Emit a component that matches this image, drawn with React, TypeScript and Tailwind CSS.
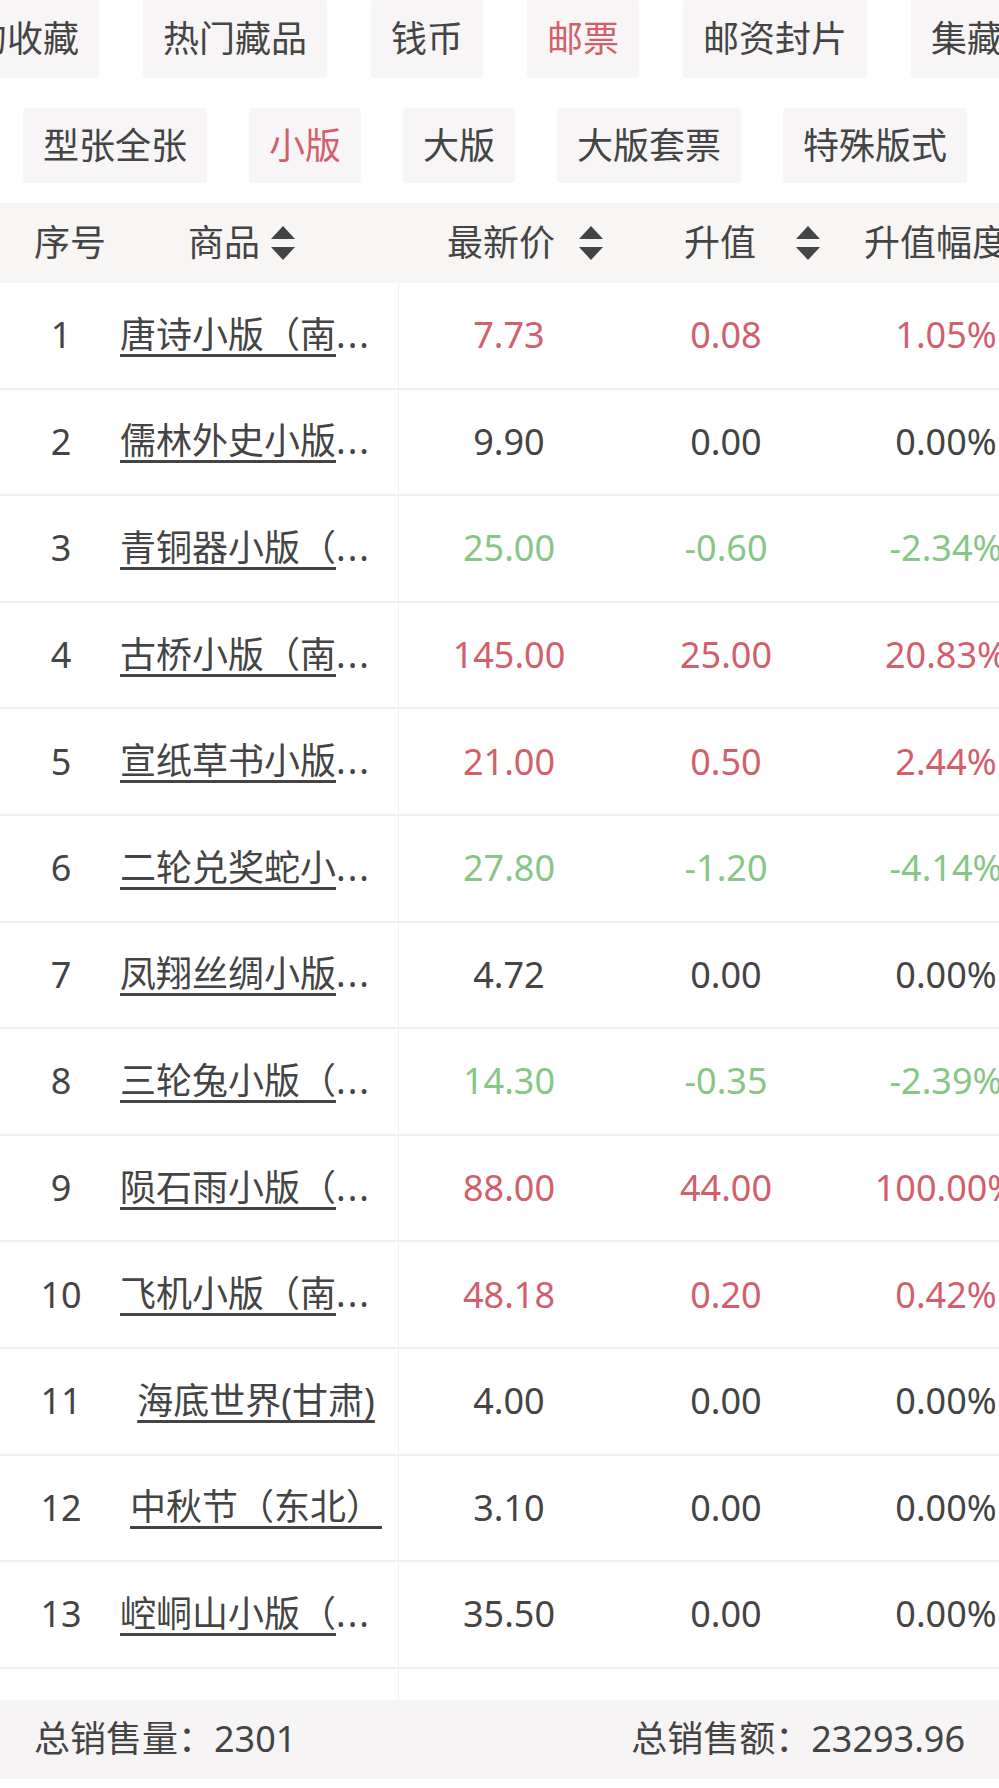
import React from 'react'

type Row = { no: number; name: string; price: string; up: string; pct: string; tone: 'red' | 'green' | 'flat'; fits?: boolean }

const topTabs = ['我的收藏', '热门藏品', '钱币', '邮票', '邮资封片', '集藏品']
const subTabs = ['型张全张', '小版', '大版', '大版套票', '特殊版式']

const rows: Row[] = [
  { no: 1, name: '唐诗小版（南京）', price: '7.73', up: '0.08', pct: '1.05%', tone: 'red' },
  { no: 2, name: '儒林外史小版（南京）', price: '9.90', up: '0.00', pct: '0.00%', tone: 'flat' },
  { no: 3, name: '青铜器小版（南京）', price: '25.00', up: '-0.60', pct: '-2.34%', tone: 'green' },
  { no: 4, name: '古桥小版（南京）', price: '145.00', up: '25.00', pct: '20.83%', tone: 'red' },
  { no: 5, name: '宣纸草书小版（南京）', price: '21.00', up: '0.50', pct: '2.44%', tone: 'red' },
  { no: 6, name: '二轮兑奖蛇小版（南京）', price: '27.80', up: '-1.20', pct: '-4.14%', tone: 'green' },
  { no: 7, name: '凤翔丝绸小版（南京）', price: '4.72', up: '0.00', pct: '0.00%', tone: 'flat' },
  { no: 8, name: '三轮兔小版（南京）', price: '14.30', up: '-0.35', pct: '-2.39%', tone: 'green' },
  { no: 9, name: '陨石雨小版（南京）', price: '88.00', up: '44.00', pct: '100.00%', tone: 'red' },
  { no: 10, name: '飞机小版（南京）', price: '48.18', up: '0.20', pct: '0.42%', tone: 'red' },
  { no: 11, name: '海底世界(甘肃)', price: '4.00', up: '0.00', pct: '0.00%', tone: 'flat', fits: true },
  { no: 12, name: '中秋节（东北）', price: '3.10', up: '0.00', pct: '0.00%', tone: 'flat', fits: true },
  { no: 13, name: '崆峒山小版（南京）', price: '35.50', up: '0.00', pct: '0.00%', tone: 'flat' },
]

const toneClass = {
  red: 'text-[#d25f6b]',
  green: 'text-[#86c686]',
  flat: 'text-[#444444]',
}

function SortIcon() {
  return (
    <svg width="24" height="34" viewBox="0 0 24 34" className="shrink-0">
      <polygon points="12,0 24,13 0,13" fill="#444444" />
      <polygon points="0,21 24,21 12,34" fill="#444444" />
    </svg>
  )
}

function Tab({ label, active }: { label: string; active?: boolean }) {
  return (
    <div className={`shrink-0 h-full flex items-center px-5 rounded bg-[#f7f5f5] whitespace-nowrap ${active ? 'text-[#d25f6b]' : 'text-[#444444]'}`}>
      {label}
    </div>
  )
}

// long names get cut to 6 chars, the dots are not underlined
function NameCell({ name, fits }: { name: string; fits?: boolean }) {
  return (
    <div className={`w-full whitespace-nowrap leading-[1.3] ${fits ? 'text-center' : 'text-left'}`}>
      <span className="underline decoration-[3px] underline-offset-[6px] decoration-[#444444]">{fits ? name : name.slice(0, 6)}</span>
      {!fits && <span className="tracking-[2px]">...</span>}
    </div>
  )
}

const cols = 'grid grid-cols-[114px_285px_220px_214px_226px] w-[1059px]'

export default function App() {
  return (
    <div className="w-[999px] h-[1788px] bg-white overflow-hidden text-[36px] leading-none text-[#444444]"
      style={{ fontFamily: '"Noto Sans", "Noto Sans CJK SC", sans-serif' }}>
      {/* top category tabs (scrolled) */}
      <div className="flex h-[78px] gap-[44px] ml-[-85px]">
        {topTabs.map(t => <Tab key={t} label={t} active={t === '邮票'} />)}
      </div>

      {/* sub tabs */}
      <div className="flex h-[75px] gap-[42px] pl-[23px] mt-[30px]">
        {subTabs.map(t => <Tab key={t} label={t} active={t === '小版'} />)}
      </div>

      {/* table */}
      <div className="mt-[20px] overflow-hidden">
        <div className={`${cols} h-[80px] bg-[#f8f5f5] items-center whitespace-nowrap`}>
          <div className="pl-[34px]">序号</div>
          <div className="flex items-center pl-[74px]">商品<span className="ml-[11px]"><SortIcon /></span></div>
          <div className="flex items-center pl-[48px]">最新价<span className="ml-[24px]"><SortIcon /></span></div>
          <div className="flex items-center pl-[65px]">升值<span className="ml-[40px]"><SortIcon /></span></div>
          <div className="pl-[31px]">升值幅度</div>
        </div>

        {rows.map(r => (
          <div key={r.no} className={`${cols} h-[106.6px] border-b-2 border-[#f0eeee] items-stretch`}>
            <div className="flex items-center justify-center pl-[8px]">{r.no}</div>
            <div className="flex items-center px-[6px] border-r border-[#efefef] overflow-hidden">
              <NameCell name={r.name} fits={r.fits} />
            </div>
            <div className={`flex items-center justify-center ${toneClass[r.tone]}`}>{r.price}</div>
            <div className={`flex items-center justify-center ${toneClass[r.tone]}`}>{r.up}</div>
            <div className={`flex items-center justify-center whitespace-nowrap ${toneClass[r.tone]}`}>{r.pct}</div>
          </div>
        ))}

        <div className={`${cols} h-[31px]`}>
          <div />
          <div className="border-r border-[#efefef]" />
        </div>
      </div>

      {/* footer totals */}
      <div className="h-[79px] bg-[#f6f4f4] flex items-center justify-between px-[34px]">
        <div>总销售量：2301</div>
        <div>总销售额：23293.96</div>
      </div>
    </div>
  )
}
